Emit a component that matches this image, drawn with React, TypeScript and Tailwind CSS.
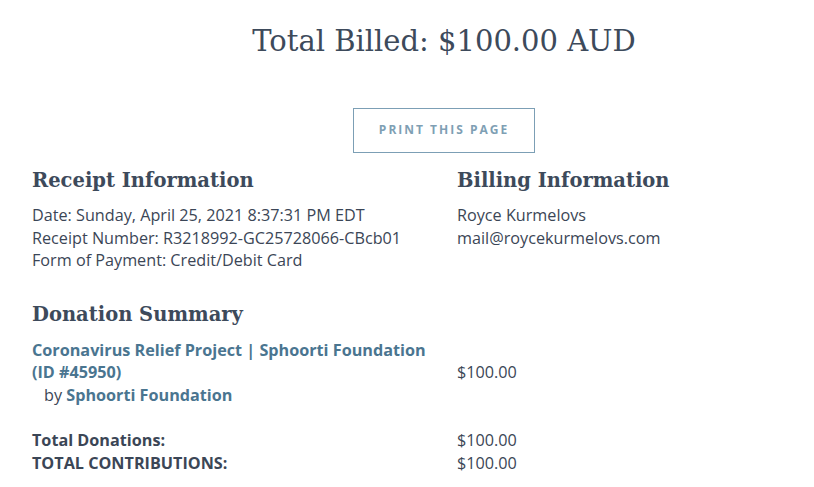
export default function App() {
  const serif = { fontFamily: '"DejaVu Serif", "Liberation Serif", serif' };
  return (
    <div
      className="min-h-screen overflow-hidden bg-white text-[#3b4656] text-[16.2px] leading-[22.5px]"
      style={{ fontFamily: '"Open Sans", "Liberation Sans", sans-serif' }}
    >
      <div className="w-[856px] pl-[32px]">
        <h1 className="pt-[21px] text-center text-[29px] leading-[40px] text-[#3d4a5b]" style={serif}>
          Total Billed: $100.00 AUD
        </h1>

        <div className="mt-[47px] flex justify-center">
          <button className="h-[45px] w-[182px] border border-[#7c9fb5] text-[12px] font-bold tracking-[2px] text-[#7f9fb4]">
            PRINT THIS PAGE
          </button>
        </div>

        <div className="mt-[14px] grid grid-cols-[425px_1fr]">
          <div>
            <h2 className="text-[19.5px] leading-[28px] font-bold text-[#3d4a5b]" style={serif}>
              Receipt Information
            </h2>
            <div className="mt-[9px]">
              <div>Date: Sunday, April 25, 2021 8:37:31 PM EDT</div>
              <div>Receipt Number: R3218992-GC25728066-CBcb01</div>
              <div>Form of Payment: Credit/Debit Card</div>
            </div>
          </div>
          <div>
            <h2 className="text-[19.5px] leading-[28px] font-bold text-[#3d4a5b]" style={serif}>
              Billing Information
            </h2>
            <div className="mt-[9px]">
              <div>Royce Kurmelovs</div>
              <div>mail@roycekurmelovs.com</div>
            </div>
          </div>
        </div>

        <h2 className="mt-[29px] text-[19.5px] leading-[28px] font-bold text-[#3d4a5b]" style={serif}>
          Donation Summary
        </h2>

        <div className="mt-[10px] grid grid-cols-[425px_1fr] items-center">
          <div>
            <div className="font-bold text-[#4a7590]">
              Coronavirus Relief Project | Sphoorti Foundation
              <br />
              (ID #45950)
            </div>
            <div className="pl-[12px]">
              by <span className="font-bold text-[#4a7590]">Sphoorti Foundation</span>
            </div>
          </div>
          <div>$100.00</div>
        </div>

        <div className="mt-[23px] grid grid-cols-[425px_1fr] font-bold">
          <div>Total Donations:</div>
          <div className="font-normal">$100.00</div>
          <div>TOTAL CONTRIBUTIONS:</div>
          <div className="font-normal">$100.00</div>
        </div>
      </div>
    </div>
  );
}
